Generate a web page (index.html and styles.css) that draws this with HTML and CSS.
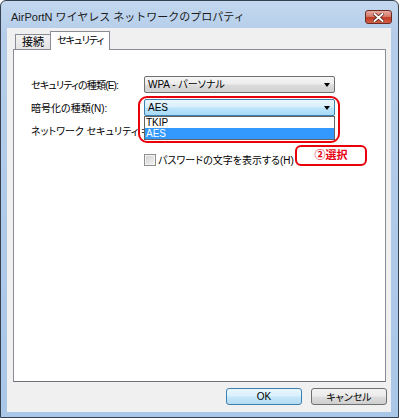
FILE: index.html
```html
<!DOCTYPE html>
<html lang="ja">
<head>
  <meta charset="UTF-8" />
  <title>AirPortN ワイヤレス ネットワークのプロパティ</title>
  <link rel="stylesheet" href="styles.css">
</head>
<body>
  <div class="window">
    <div class="titlebar">
      <span class="title">AirPortN ワイヤレス ネットワークのプロパティ</span>
      <span class="close-btn">
        <svg width="11" height="9" viewBox="0 0 11 9">
          <path d="M1.5 1 L9.5 8 M9.5 1 L1.5 8" stroke="#5a2a22" stroke-width="3.4" stroke-linecap="square"/>
          <path d="M1.5 1 L9.5 8 M9.5 1 L1.5 8" stroke="#fff" stroke-width="1.8" stroke-linecap="square"/>
        </svg>
      </span>
    </div>

    <div class="client">
      <div class="tabs">
        <div class="tab">接続</div>
        <div class="tab active">セキュリティ</div>
      </div>

      <div class="panel">
        <div class="form">
          <span class="label tight">セキュリティの種類(E):</span>
          <div class="combo">WPA - パーソナル<span class="arrow"></span></div>

          <span class="label">暗号化の種類(N):</span>
          <div class="combo-wrap">
            <div class="combo open">AES<span class="arrow"></span></div>
            <ul class="dropdown">
              <li>TKIP</li>
              <li class="selected">AES</li>
            </ul>
            <div class="ring"></div>
          </div>

          <!-- 開いたリストの下に隠れる -->
          <span class="label clipped">ネットワーク セキュリティ キー(K):</span>
          <div></div>

          <div class="check-row">
            <span class="checkbox"></span>
            <span>パスワードの文字を表示する(H)</span>
            <span class="note">②選択</span>
          </div>
        </div>
      </div>

      <div class="buttons">
        <button class="default">OK</button>
        <button>キャンセル</button>
      </div>
    </div>
  </div>
</body>
</html>
```

FILE: styles.css
```css
* {
  box-sizing: border-box;
  margin: 0;
  padding: 0;
}

body {
  background: #fff;
  font-family: "Liberation Sans", "Noto Sans CJK JP", sans-serif;
  font-size: 10px;
  font-feature-settings: "palt";
  color: #000;
}

.window {
  width: 399px;
  height: 418px;
  border: 1px solid #36414f;
  border-radius: 6px 6px 0 0;
  background: linear-gradient(to bottom, #c3d8ef 0%, #b5cdea 8%, #aac7e8 100%);
  padding: 0 7px 5px 6px;
  display: flex;
  flex-direction: column;
}

.titlebar {
  height: 27px;
  display: flex;
  justify-content: space-between;
  align-items: flex-start;
  margin-right: -1px;
}

.title {
  font-size: 11px;
  font-feature-settings: normal;
  color: #1b1b1b;
  padding: 7px 0 0 4px;
}

.close-btn {
  width: 27px;
  height: 14px;
  margin-top: 9px;
  border: 1px solid #6b2b21;
  border-radius: 3px;
  background: linear-gradient(to bottom, #e8aa9f 0%, #d57d6c 45%, #bf3b24 55%, #d4604a 100%);
  display: flex;
  align-items: center;
  justify-content: center;
}

.client {
  flex: 1;
  background: #f0f0f0;
  display: flex;
  flex-direction: column;
  padding: 3px 5px 7px 6px;
}

.tabs {
  display: flex;
  align-items: flex-end;
  height: 18px;
  padding-left: 2px;
  position: relative;
  z-index: 1;
}

.tab {
  height: 15px;
  padding: 0 6px;
  border: 1px solid #898c95;
  border-bottom: none;
  background: linear-gradient(to bottom, #f3f3f3, #e3e3e3);
  font-size: 11px;
  line-height: 14px;
}

.tab.active {
  height: 19px;
  margin-bottom: -1px;
  margin-left: -1px;
  background: #fff;
  padding: 0 6px;
  font-size: 10px;
  letter-spacing: -0.9px;
  line-height: 17px;
}

.panel {
  flex: 1;
  background: #fff;
  border: 1px solid #898c95;
  border-bottom-color: #6f7278;
  padding: 26px 0 0 17px;
}

.form {
  display: grid;
  grid-template-columns: 113px 191px;
  grid-auto-rows: 17px;
  row-gap: 6px;
  align-items: center;
}

.label {
  white-space: nowrap;
}

.label.tight {
  letter-spacing: -0.8px;
}

.label.clipped {
  overflow: hidden;
}

.combo {
  position: relative;
  height: 17px;
  border: 1px solid #707070;
  border-radius: 2px;
  background: linear-gradient(to bottom, #f7f7f7 0%, #ececec 48%, #dcdcdc 52%, #d2d2d2 100%);
  padding-left: 3px;
  line-height: 15px;
}

.combo.open {
  border-color: #3c7fb1;
  background: linear-gradient(to bottom, #eaf6fd 0%, #d8effc 48%, #bde6fd 52%, #a7d9f5 100%);
}

.arrow {
  position: absolute;
  right: 4px;
  top: 6px;
  width: 0;
  height: 0;
  border-left: 3.5px solid transparent;
  border-right: 3.5px solid transparent;
  border-top: 4px solid #000;
}

.combo-wrap {
  position: relative;
  height: 17px;
}

.dropdown {
  position: absolute;
  top: 17px;
  left: 0;
  width: 191px;
  list-style: none;
  background: #fff;
  border: 1px solid #646464;
  z-index: 2;
}

.dropdown li {
  height: 11px;
  line-height: 11px;
  padding-left: 1px;
}

.dropdown li.selected {
  background: #3399ff;
  color: #fff;
}

.ring {
  position: absolute;
  left: -6px;
  right: -5px;
  top: -3px;
  bottom: -27px;
  border: 2px solid #e8000b;
  border-radius: 9px;
  z-index: 3;
}

.check-row {
  grid-column: 2;
  position: relative;
  display: flex;
  align-items: center;
  gap: 2px;
  height: 13px;
  margin-top: 12px;
  white-space: nowrap;
}

.checkbox {
  width: 12px;
  height: 12px;
  border: 1px solid #8e8f8f;
  background: linear-gradient(135deg, #d0d0d0, #f4f4f4);
  box-shadow: inset 0 0 0 1px #f4f4f4;
}

.note {
  position: absolute;
  left: 151px;
  top: -8px;
  width: 72px;
  height: 21px;
  border: 2px solid #e8000b;
  border-radius: 6px;
  background: #fff;
  color: #e60012;
  font-weight: bold;
  font-size: 11px;
  text-align: center;
  line-height: 16px;
}

.buttons {
  display: flex;
  justify-content: flex-end;
  gap: 9px;
  margin-top: 6px;
  margin-right: -1px;
}

button {
  width: 76px;
  height: 17px;
  font-family: inherit;
  font-size: 10px;
  font-feature-settings: "palt";
  border: 1px solid #707070;
  border-radius: 3px;
  background: linear-gradient(to bottom, #f2f2f2 0%, #ebebeb 48%, #dddddd 52%, #cfcfcf 100%);
  color: #000;
}

button.default {
  border-color: #3c7fb1;
  background: linear-gradient(to bottom, #eaf6fd 0%, #d9f0fc 48%, #c6e7f8 52%, #b4ddf3 100%);
}
```
